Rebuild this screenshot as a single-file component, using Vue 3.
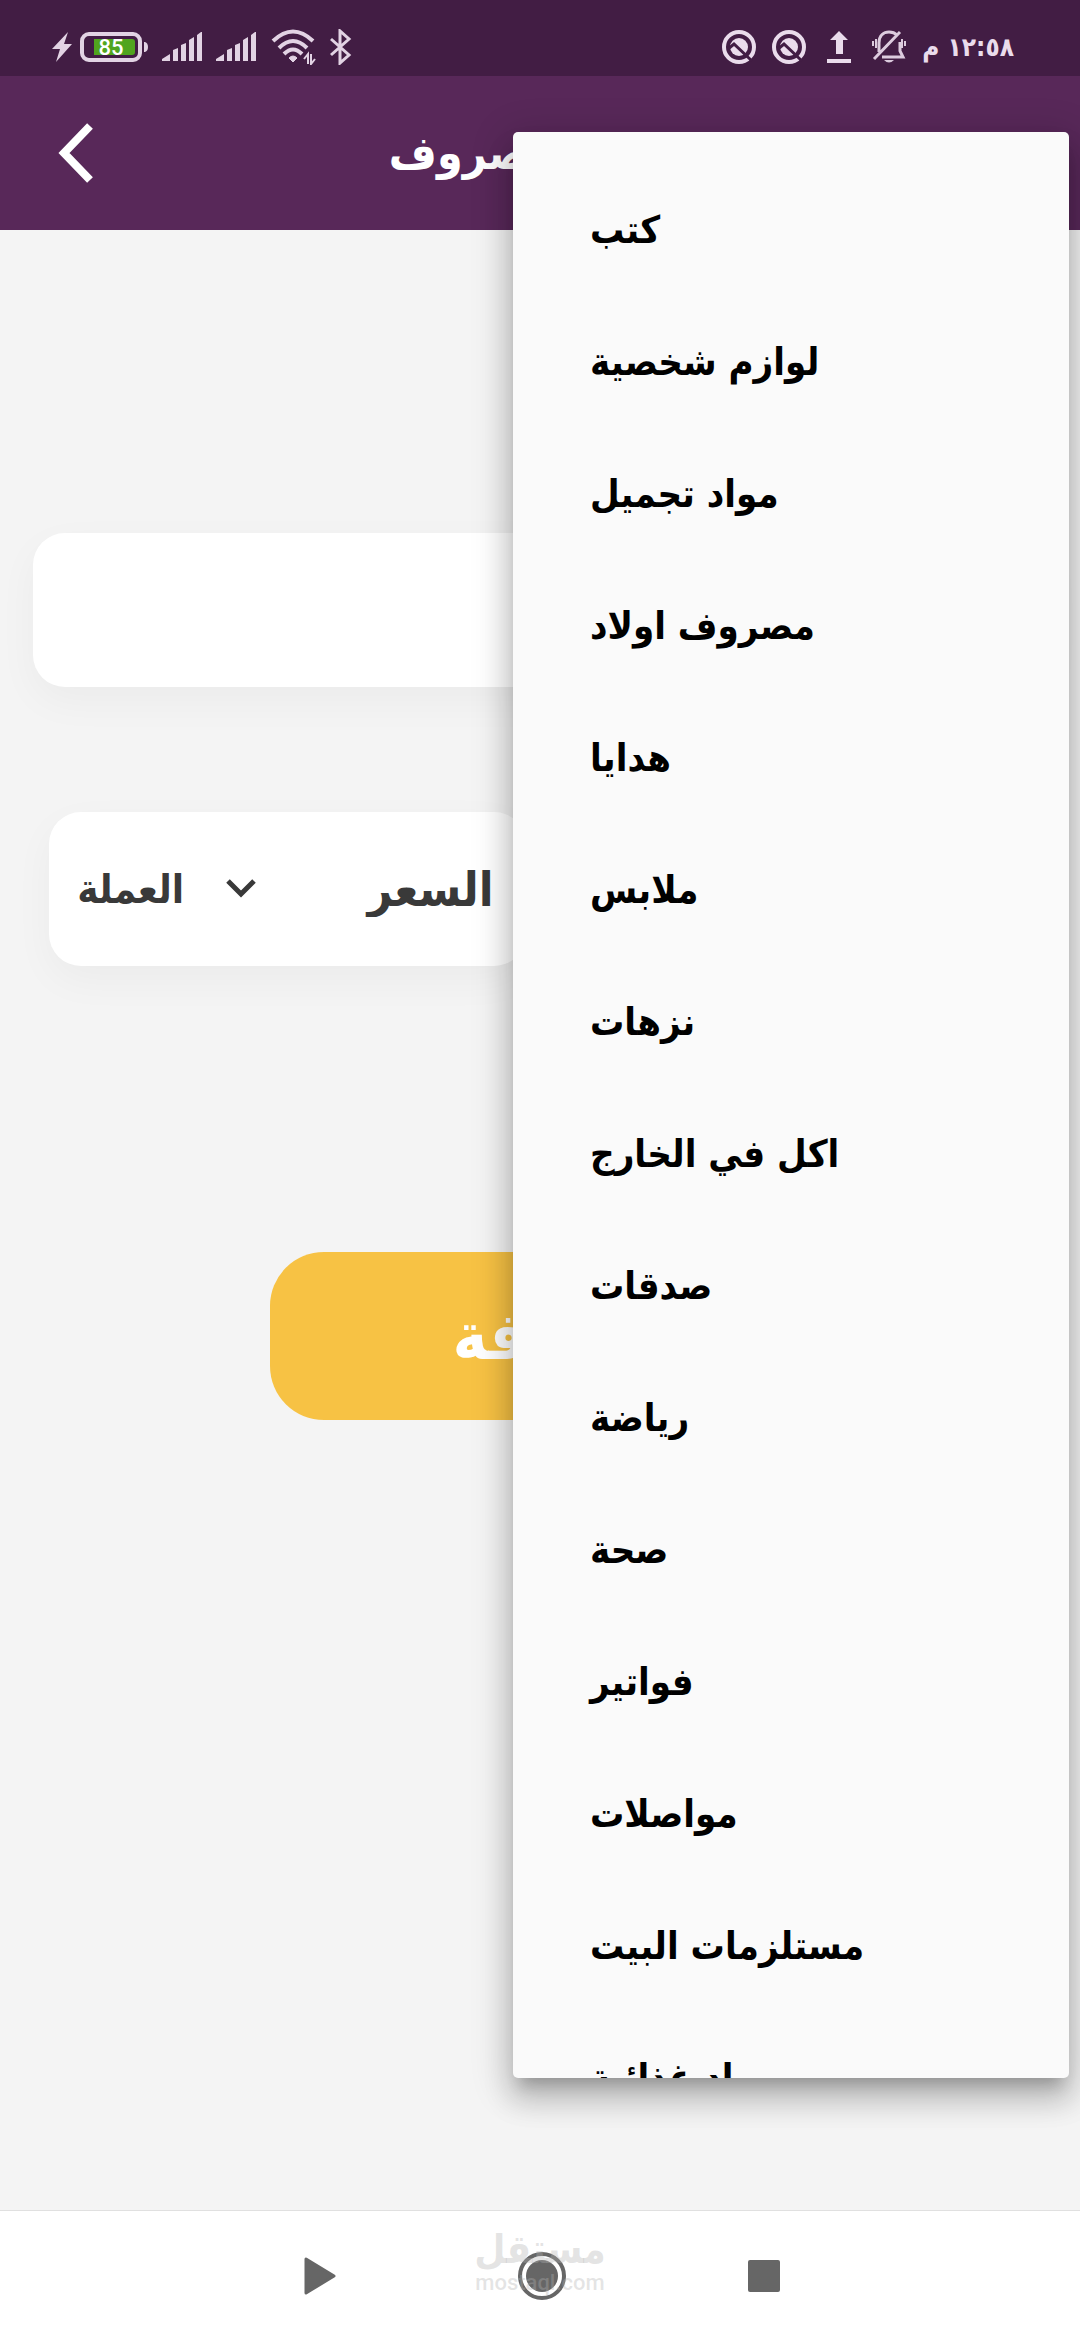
<script setup>
import { ref } from 'vue'

const categories = [
  'كتب',
  'لوازم شخصية',
  'مواد تجميل',
  'مصروف اولاد',
  'هدايا',
  'ملابس',
  'نزهات',
  'اكل في الخارج',
  'صدقات',
  'رياضة',
  'صحة',
  'فواتير',
  'مواصلات',
  'مستلزمات البيت',
  'مواد غذائية',
]

const selected = ref('')
const price = ref('')
const currency = ref('')
</script>

<template>
  <div class="screen">
    <div class="status">
      <div class="status-left">
        <div class="power">
          <svg width="20" height="30" viewBox="0 0 20 30" fill="#e2d3e4"><path d="M16 0 0 17h8L4 30 20 12h-8z" /></svg>
          <svg width="68" height="30" viewBox="0 0 68 30">
            <rect x="2" y="2" width="58" height="26" rx="7" fill="none" stroke="#e2d3e4" stroke-width="4" />
            <path d="M14 7h38a3 3 0 0 1 3 3v10a3 3 0 0 1-3 3H14z" fill="#50a51e" />
            <path d="M64 10h1q3 1 3 5t-3 5h-1z" fill="#e2d3e4" />
            <text x="31" y="23" text-anchor="middle" class="level">85</text>
          </svg>
        </div>
        <svg v-for="n in 2" :key="n" width="40" height="30" viewBox="0 0 40 30" fill="#e2d3e4">
          <path d="M0 29v-2l8-5v7zM11 29V18l5-2v13zM19 29V13l5-2v18zM27 29V8l5-3v24zM35 29V3l4-3h1v29z" />
        </svg>
        <svg width="46" height="36" viewBox="0 0 46 36" fill="none" stroke="#e2d3e4" stroke-width="4">
          <path d="M3 12Q23-7 43 12M9 19Q23 5 37 19M14 25Q23 16 32 25" />
          <path d="M19 29q4-4 8 0l-4 4z" fill="#e2d3e4" stroke="#e2d3e4" stroke-width="1" />
          <path d="M38 35V25l-4 5M41 25v10l4-5" stroke-width="2" />
        </svg>
        <svg width="22" height="36" viewBox="0 0 22 36" fill="none" stroke="#e2d3e4" stroke-width="3">
          <path d="M1 10 19 26l-9 8V2l9 8L1 26" />
        </svg>
      </div>
      <div class="status-right">
        <svg v-for="n in 2" :key="n" width="34" height="34" viewBox="0 0 34 34">
          <circle cx="17" cy="17" r="15" fill="none" stroke="#eadcec" stroke-width="4" />
          <circle cx="17" cy="17" r="9" fill="#eadcec" />
          <path d="m6 19 6-5 18 17" fill="none" stroke="#421d44" stroke-width="3" />
        </svg>
        <svg width="34" height="34" viewBox="0 0 34 34" fill="#eadcec"><path d="m17 1 9 9h-5v14h-7V10H8zM5 29h24v4H5z" /></svg>
        <svg width="34" height="34" viewBox="0 0 34 34" fill="none" stroke="#dccbde" stroke-width="3">
          <path d="M7 22V13C7 5 12 2 17 2q5 0 8 3M28 12v9l3 6H10M2 29 28 2" />
          <path d="M12 30h10q-5 5-10 0z" fill="#dccbde" stroke="none" />
          <path d="M1 11v5M4 9v9M33 11v5M30 9v9" stroke-width="2" />
        </svg>
        <span class="time" dir="rtl">١٢:٥٨ م</span>
      </div>
    </div>

    <header class="appbar">
      <button class="back" type="button" aria-label="رجوع">
        <svg width="36" height="60" viewBox="0 0 36 60" fill="none" stroke="#fff" stroke-width="8"><path d="M32 3 6 30l26 27" /></svg>
      </button>
      <h1>اضافة مصروف</h1>
    </header>

    <main class="body">
      <button class="card category" type="button" aria-haspopup="listbox" aria-label="الفئة">{{ selected }}</button>
      <div class="card amount" dir="rtl">
        <input v-model="price" type="text" placeholder="السعر" aria-label="السعر" />
        <label class="currency">
          <svg width="30" height="20" viewBox="0 0 30 20" fill="none" stroke="#393939" stroke-width="5"><path d="m2 2 13 13L28 2" /></svg>
          <select v-model="currency" aria-label="العملة">
            <option value="">العملة</option>
          </select>
        </label>
      </div>
      <button class="submit" type="button">اضافة</button>
    </main>

    <nav class="navbar">
      <button type="button" aria-label="رجوع">
        <svg width="32" height="38" viewBox="0 0 32 38"><path d="M2 2v34l28-17z" fill="#666" stroke="#666" stroke-width="3" stroke-linejoin="round" /></svg>
      </button>
      <button type="button" aria-label="الرئيسية">
        <svg width="50" height="50" viewBox="0 0 50 50"><circle cx="25" cy="25" r="22" fill="none" stroke="#666" stroke-width="4" /><circle cx="25" cy="25" r="16" fill="#666" /></svg>
      </button>
      <button type="button" aria-label="التطبيقات">
        <svg width="32" height="32" viewBox="0 0 32 32"><rect width="32" height="32" rx="2" fill="#666" /></svg>
      </button>
      <div class="watermark"><span class="mark-ar">مستقل</span><span class="mark-en">mostaql.com</span></div>
    </nav>

    <ul class="menu">
      <li v-for="name in categories" :key="name">
        <button type="button" @click="selected = name">{{ name }}</button>
      </li>
    </ul>
  </div>
</template>

<style>
body {
  margin: 0;
}
</style>

<style scoped>
.screen {
  position: relative;
  display: flex;
  flex-direction: column;
  min-height: 100vh;
  overflow: hidden;
  background: #f4f4f4;
  font-family: "DejaVu Sans Condensed", "DejaVu Sans", sans-serif;
  font-weight: 700;
}
button,
input,
select {
  margin: 0;
  padding: 0;
  border: 0;
  background: none;
  font: inherit;
  color: inherit;
}
svg {
  display: block;
  flex: none;
}
.status {
  display: flex;
  justify-content: space-between;
  align-items: center;
  box-sizing: border-box;
  height: 76px;
  padding: 18px 66px 0 52px;
  background: #421d44;
}
.status-left {
  display: flex;
  align-items: center;
  gap: 14px;
}
.power {
  display: flex;
  gap: 8px;
}
.level {
  font: 500 22px Roboto, sans-serif;
  fill: #fff;
}
.status-right {
  display: flex;
  align-items: center;
  gap: 16px;
}
.time {
  color: #eadcec;
  font-size: 26px;
  line-height: 32px;
  white-space: nowrap;
}
.appbar {
  display: flex;
  align-items: center;
  justify-content: center;
  position: relative;
  height: 154px;
  background: #582859;
  color: #fff;
}
.back {
  position: absolute;
  left: 58px;
}
h1 {
  margin: 0;
  font-size: 46px;
  line-height: 64px;
}
.body {
  flex: 1;
  display: flex;
  flex-direction: column;
  padding: 303px 33px 0;
}
.card {
  height: 154px;
  border-radius: 32px;
  background: #fff;
  box-shadow: 0 14px 40px rgba(0, 0, 0, 0.04);
}
.amount {
  display: flex;
  align-items: center;
  justify-content: space-between;
  box-sizing: border-box;
  width: 47%;
  margin: 125px 16px 0;
  padding: 0 32px 0 28px;
  color: #393939;
}
.amount input {
  flex: 1;
  min-width: 0;
  font-size: 48px;
  line-height: 64px;
}
.amount input::placeholder {
  color: #393939;
  opacity: 1;
}
.currency {
  display: flex;
  align-items: center;
  gap: 42px;
}
.currency select {
  appearance: none;
  font-size: 40px;
  line-height: 48px;
}
.submit {
  align-self: center;
  width: 540px;
  max-width: 100%;
  height: 168px;
  margin-top: 286px;
  border-radius: 54px;
  background: #f7c244;
  color: #fff;
  font-size: 66px;
}
.navbar {
  position: relative;
  display: flex;
  justify-content: center;
  align-items: center;
  gap: 158px;
  height: 129px;
  padding-left: 4px;
  border-top: 1px solid #e0e0e0;
  background: #fff;
}
.navbar button {
  display: flex;
  justify-content: center;
  width: 64px;
}
.watermark {
  position: absolute;
  inset: 16px 0 auto;
  display: flex;
  flex-direction: column;
  align-items: center;
  color: rgba(178, 178, 178, 0.35);
  pointer-events: none;
}
.mark-ar {
  font-size: 40px;
  line-height: 44px;
}
.mark-en {
  font: 500 22px/24px Roboto, sans-serif;
}
.menu {
  position: absolute;
  top: 132px;
  right: 11px;
  bottom: 262px;
  left: 47.5%;
  box-sizing: border-box;
  margin: 0;
  padding: 32px 0;
  overflow: hidden;
  border-radius: 5px;
  background: #fafafa;
  box-shadow:
    0 14px 14px -8px rgba(0, 0, 0, 0.2),
    0 22px 28px 3px rgba(0, 0, 0, 0.14),
    0 8px 38px 6px rgba(0, 0, 0, 0.16);
  list-style: none;
}
.menu button {
  display: block;
  width: 100%;
  height: 132px;
  padding: 0 77px;
  color: #000;
  font-size: 38px;
  line-height: 48px;
  text-align: left;
}
</style>
